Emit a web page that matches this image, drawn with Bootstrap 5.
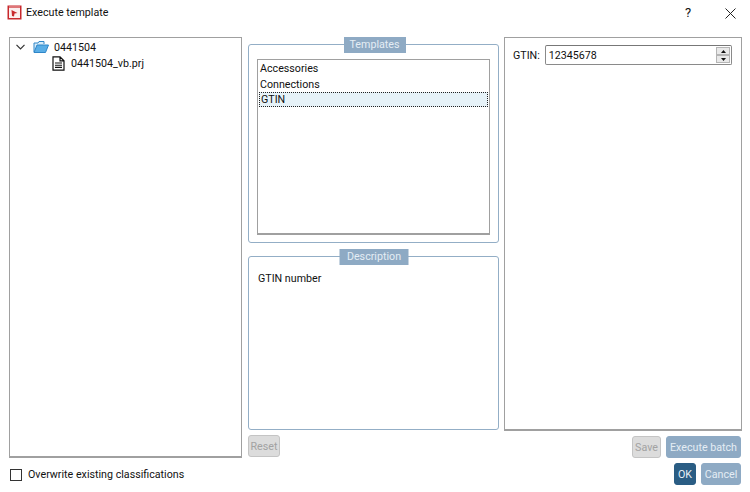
<!DOCTYPE html>
<html lang="en">
<head>
  <meta charset="UTF-8" />
  <meta name="viewport" content="width=device-width, initial-scale=1.0"/>
  <title>Execute template</title>
  <link href="https://cdn.jsdelivr.net/npm/bootstrap@5.3.2/dist/css/bootstrap.min.css" rel="stylesheet">
  <style>
    html, body { height: 100%; }
    body {
      background: #fff;
      color: #111;
      font-family: Roboto, "Open Sans", sans-serif;
      font-size: 10.7px;
      line-height: 15px;
      overflow: hidden;
    }
    /* title bar */
    .dlg-title { height: 25px; padding-left: 7px; }
    .dlg-title .cap { margin-left: 4px; }
    .dlg-help { width: 46px; text-align: center; font-size: 13px; }
    .dlg-close { width: 38px; padding-left: 14px; margin-right: 1px; }

    /* panes */
    .dlg-main { height: 421px; margin-top: 12px; padding-left: 9px; padding-right: 8px; }
    .pane-plain { border: 1px solid #a0a0a0; border-bottom-width: 2px; }
    .pane-tree { width: 233px; padding: 1px 0 0 6px; }
    .pane-mid { width: 251px; margin-left: 6px; padding-top: 7px; }
    .pane-right { width: 238px; margin-left: 5px; }
    .pane-right-box { height: 394px; padding: 7px 9px 0 8px; }

    .tree-row { height: 16px; }
    .tree-sub { padding-left: 36px; }
    .tree-sub span { margin-left: 6px; }
    .tree-top span { margin-left: 5px; }
    .tree-top svg:first-child { margin-right: 8px; }
    .gtin-label { margin-top: 3px; }

    /* group boxes with a blue caption over the top border */
    .grp { position: relative; border: 1px solid #93aec6; border-radius: 3px; }
    .grp-cap {
      position: absolute; top: -8px; left: 50%; transform: translateX(-50%);
      height: 16px; line-height: 15px;
      background: #8eaac4; color: #e4edf4; text-align: center;
    }
    .grp-tpl { height: 199px; padding: 14px 8px 7px 8px; }
    .grp-tpl .grp-cap { width: 62px; margin-left: 1px; }
    .grp-desc { height: 174px; margin-top: 13px; padding: 14px 8px 0 9px; }
    .grp-desc .grp-cap { width: 69px; margin-left: 0.5px; }
    .tpl-list { height: 100%; border: 1px solid #a0a0a0; border-bottom-width: 2px; padding: 0 1px; }
    .tpl-item { height: 15.5px; padding-left: 1px; line-height: 17px; }
    .tpl-item.picked { height: 15px; background: #e6f2f8; border: 1px dotted #222; line-height: 13px; padding-left: 1px; margin-top: 1px; }

    /* GTIN spinner */
    .spin-box {
      width: 188px; height: 20px; margin-left: 5px; padding: 0 1px 0 3px;
      border: 1px solid #8a8a8a; border-top-color: #777; border-radius: 2px;
    }
    .spin-btns { width: 14px; height: 16px; gap: 0; }
    .spin-btns div {
      height: 8px; background: #e9e9e9; border: 1px solid #b5b5b5;
      display: flex; align-items: center; justify-content: center;
    }

    /* buttons */
    .dlg-btn {
      height: 22px; padding: 0; border-radius: 3px; border: 1px solid transparent;
      font-size: 10.7px; line-height: 19px; white-space: nowrap; --bs-btn-font-size: 10.7px;
    }
    .btn-off, .btn-off:disabled { background: #dcdcdc; border-color: #c4c4c4; color: #a2a2a2; opacity: 1; }
    .btn-soft, .btn-soft:disabled { background: #8eaac4; color: #e4edf4; opacity: 1; border-color: #8eaac4; }
    .btn-main { background: #2a5d84; color: #e8f0f6; border-color: #2a5d84; }
    .w-reset { width: 32px; margin-top: 5px; }
    .w-save { width: 29px; }
    .w-batch { width: 75px; margin-left: 5px; }
    .w-ok { width: 22px; }
    .w-cancel { width: 40px; margin-left: 5px; }
    .row-save { margin-top: 5px; padding-right: 1px; }

    .dlg-foot { padding: 5px 9px 0 10px; }
    .tick { width: 12px; height: 12px; border: 1px solid #333; background: #fff; margin-right: 6px; margin-top: 1px; }
  </style>
</head>
<body>

  <!-- Title bar -->
  <div class="dlg-title d-flex align-items-center">
    <svg width="15" height="15" viewBox="0 0 15 15">
      <rect x="0.5" y="0.5" width="14" height="14" fill="#c8282c"/>
      <rect x="2" y="3" width="11" height="10" fill="#fbeeee"/>
      <rect x="2" y="1.5" width="11" height="1" fill="#f3c4c4"/>
      <path d="M4.5 5 L10.5 8 L7.5 8.5 L7 11.5 L5 11 Z" fill="#c8282c"/>
    </svg>
    <span class="cap flex-grow-1">Execute template</span>
    <div class="dlg-help">?</div>
    <div class="dlg-close">
      <svg width="11" height="11" viewBox="0 0 11 11"><path d="M0.5 0.5 L10.5 10.5 M10.5 0.5 L0.5 10.5" stroke="#222" stroke-width="1" fill="none"/></svg>
    </div>
  </div>

  <!-- Panes -->
  <div class="dlg-main d-flex">
    <div class="pane-plain pane-tree">
      <div class="tree-row tree-top d-flex align-items-center">
        <svg width="9" height="6" viewBox="0 0 9 6"><path d="M0.5 0.8 L4.5 4.8 L8.5 0.8" stroke="#333" stroke-width="1.2" fill="none"/></svg>
        <svg width="16" height="14" viewBox="0 0 16 14">
          <path d="M1 12 V3 H5 L6 1.5 H11 V4" fill="#d9ecf8" stroke="#2f86c8"/>
          <path d="M1 12.5 L4 5 H15.5 L12.5 12.5 Z" fill="#5aaee6" stroke="#2f86c8"/>
        </svg>
        <span>0441504</span>
      </div>
      <div class="tree-row tree-sub d-flex align-items-center">
        <svg width="13" height="15" viewBox="0 0 13 15">
          <path d="M1 0.8 H8 L12 4.8 V14.2 H1 Z M8 0.8 V4.8 H12" fill="#fff" stroke="#111" stroke-width="1.2"/>
          <path d="M3 7 H10 M3 9.2 H10 M3 11.4 H10" stroke="#111" stroke-width="1.1"/>
        </svg>
        <span>0441504_vb.prj</span>
      </div>
    </div>

    <div class="pane-mid d-flex flex-column">
      <div class="grp grp-tpl">
        <div class="grp-cap">Templates</div>
        <div class="tpl-list">
          <div class="tpl-item">Accessories</div>
          <div class="tpl-item">Connections</div>
          <div class="tpl-item picked">GTIN</div>
        </div>
      </div>
      <div class="grp grp-desc">
        <div class="grp-cap">Description</div>
        GTIN number
      </div>
      <div><button class="btn dlg-btn btn-off w-reset" disabled>Reset</button></div>
    </div>

    <div class="pane-right d-flex flex-column">
      <div class="pane-plain pane-right-box d-flex align-items-start">
        <span class="gtin-label">GTIN:</span>
        <div class="spin-box d-flex align-items-center justify-content-between">
          <span>12345678</span>
          <div class="spin-btns d-flex flex-column">
            <div><svg width="5" height="3" viewBox="0 0 5 3"><path d="M2.5 0 L5 3 H0 Z" fill="#111"/></svg></div>
            <div><svg width="5" height="3" viewBox="0 0 5 3"><path d="M0 0 H5 L2.5 3 Z" fill="#111"/></svg></div>
          </div>
        </div>
      </div>
      <div class="row-save d-flex justify-content-end">
        <button class="btn dlg-btn btn-off w-save" disabled>Save</button>
        <button class="btn dlg-btn btn-soft w-batch" disabled>Execute batch</button>
      </div>
    </div>
  </div>

  <!-- Footer -->
  <div class="dlg-foot d-flex justify-content-between align-items-start">
    <label class="d-flex align-items-center mt-1">
      <span class="tick"></span>Overwrite existing classifications
    </label>
    <div class="d-flex">
      <button class="btn dlg-btn btn-main w-ok">OK</button>
      <button class="btn dlg-btn btn-soft w-cancel" disabled>Cancel</button>
    </div>
  </div>

  <script src="https://cdn.jsdelivr.net/npm/bootstrap@5.3.2/dist/js/bootstrap.bundle.min.js"></script>
</body>
</html>
